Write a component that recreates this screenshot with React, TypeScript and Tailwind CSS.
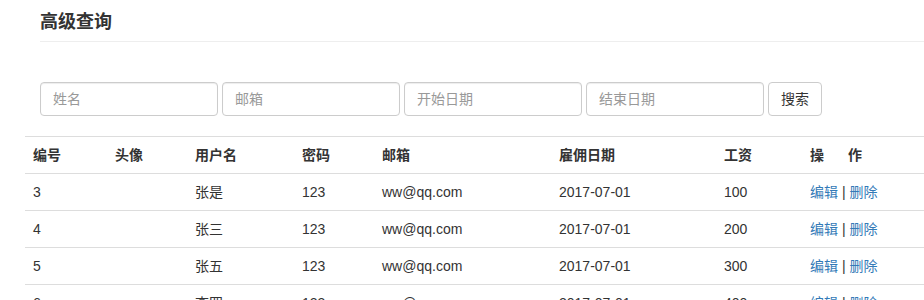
import React from "react";

const font = { fontFamily: '"Liberation Sans", "Noto Sans CJK SC", sans-serif' };

const rows = [
  ["3", "", "张是", "123", "ww@qq.com", "2017-07-01", "100"],
  ["4", "", "张三", "123", "ww@qq.com", "2017-07-01", "200"],
  ["5", "", "张五", "123", "ww@qq.com", "2017-07-01", "300"],
  ["6", "", "李四", "123", "ww@qq.com", "2017-07-01", "400"],
];

const widths = ["w-[82px]", "w-[80px]", "w-[107px]", "w-[80px]", "w-[177px]", "w-[165px]", "w-[86px]", ""];

export default function App() {
  return (
    <div className="w-[924px] h-[300px] overflow-hidden bg-white text-[14px] text-[#333]" style={font}>
      <div className="pl-[40px] pt-[10px]">
        <h3 className="text-[18px] font-bold leading-[24px] text-[#333] pb-[7px] border-b border-[#eee]">高级查询</h3>
      </div>
      <div className="pl-[40px] pt-[40px] flex gap-[4px]">
        {["姓名", "邮箱", "开始日期", "结束日期"].map((p) => (
          <input
            key={p}
            placeholder={p}
            className="w-[178px] h-[34px] rounded-[4px] border border-[#ccc] px-[12px] text-[14px] placeholder:text-[#999] shadow-[inset_0_1px_1px_rgba(0,0,0,0.075)] outline-none"
            style={font}
          />
        ))}
        <button className="h-[34px] w-[54px] rounded-[4px] border border-[#ccc] bg-white text-[14px] text-[#333]" style={font}>
          搜索
        </button>
      </div>
      <div className="pl-[25px] pt-[20px]">
        <table className="w-[899px] border-collapse table-fixed">
          <thead>
            <tr className="border-t border-b border-[#ddd]">
              {["编号", "头像", "用户名", "密码", "邮箱", "雇佣日期", "工资"].map((h, i) => (
                <th key={h} className={`${widths[i]} text-left font-bold px-[8px] py-[8px] leading-[20px]`}>{h}</th>
              ))}
              <th className="text-left font-bold px-[8px] py-[8px] leading-[20px]">
                操<span className="inline-block w-[24px]"></span>作
              </th>
            </tr>
          </thead>
          <tbody>
            {rows.map((r) => (
              <tr key={r[0]} className="border-b border-[#ddd]">
                {r.map((c, i) => (
                  <td key={i} className="px-[8px] py-[8px] leading-[20px]">{c}</td>
                ))}
                <td className="px-[8px] py-[8px] leading-[20px]">
                  <a className="text-[#337ab7]">编辑</a> | <a className="text-[#337ab7]">删除</a>
                </td>
              </tr>
            ))}
          </tbody>
        </table>
      </div>
    </div>
  );
}
